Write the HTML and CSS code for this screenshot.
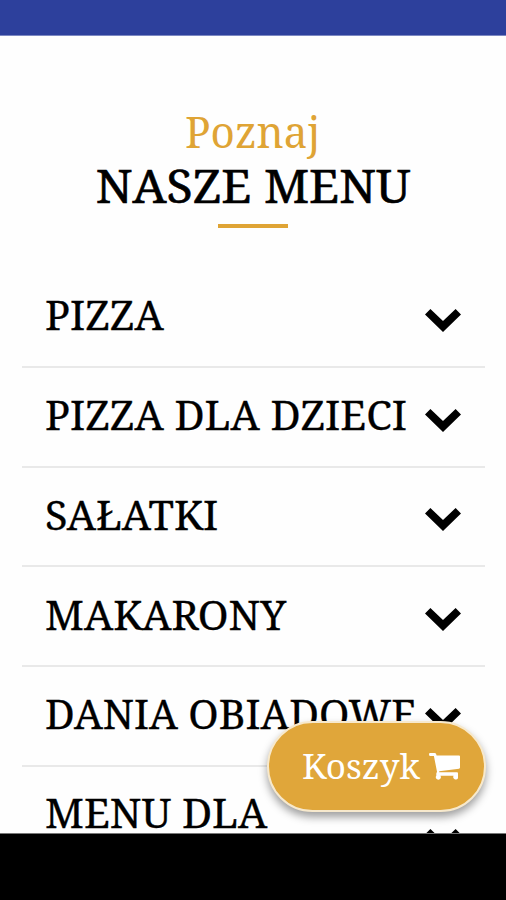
FILE: index.html
```html
<!DOCTYPE html>
<html lang="pl">
<head>
<meta charset="utf-8">
<meta name="viewport" content="width=device-width, initial-scale=1">
<title>Nasze menu</title>
<link rel="stylesheet" href="styles.css">
</head>
<body>
<svg class="symbols" aria-hidden="true">
  <symbol id="chevron" viewBox="0 0 36 23"><path d="M0 5.4 5.4 0 18 12 30.6 0 36 5.4 18 23Z"/></symbol>
</svg>
<div class="status-bar"></div>
<main class="page">
  <header class="heading">
    <p class="heading-lead">Poznaj</p>
    <h1 class="heading-title">NASZE MENU</h1>
    <div class="heading-rule"></div>
  </header>
  <ul class="menu">
    <li class="item"><span class="label">PIZZA</span><svg class="chevron"><use href="#chevron"/></svg></li>
    <li class="item"><span class="label">PIZZA DLA DZIECI</span><svg class="chevron"><use href="#chevron"/></svg></li>
    <li class="item"><span class="label">SAŁATKI</span><svg class="chevron"><use href="#chevron"/></svg></li>
    <li class="item"><span class="label">MAKARONY</span><svg class="chevron"><use href="#chevron"/></svg></li>
    <li class="item"><span class="label label-long">DANIA OBIADOWE</span><svg class="chevron"><use href="#chevron"/></svg></li>
    <li class="item item-tall"><span class="label">MENU DLA</span><svg class="chevron"><use href="#chevron"/></svg></li>
  </ul>
  <a class="cart" href="#"><span class="cart-label">Koszyk</span>
    <svg class="cart-icon" viewBox="0 0 31 28"><path d="M1 0H5.6Q6.8 0 7.1 1L7.6 2.5H30Q31 2.5 31 3.5V14.6Q31 15.6 30 15.8L10.2 18.2V19.3H28Q29 19.3 29 20.6V25.2A2.5 2.5 0 1 1 24.6 22.8H11.4A2.5 2.5 0 1 1 7.3 22.8V20.4L8 18.7 4.9 2.9H1Q0 2.9 0 1.45 0 0 1 0Z"/></svg>
  </a>
</main>
<div class="nav-bar"></div>
</body>
</html>
```
FILE: styles.css
```css
* { box-sizing: border-box; margin: 0; padding: 0; }
body {
  width: 506px;
  height: 900px;
  overflow: hidden;
  background: #fefefe;
  color: #000;
  font-family: "Droid Serif", "Noto Serif", "Liberation Serif", serif;
  display: flex;
  flex-direction: column;
}
.symbols { position: absolute; width: 0; height: 0; }
.status-bar { flex: none; height: 36px; background: #2d409c; border-bottom: 1px solid #7c88c2; }
.page { position: relative; flex: none; height: 797px; overflow: hidden; }
.nav-bar { flex: none; height: 67px; background: #000; border-top: 1px solid #777; }
.heading { display: flex; flex-direction: column; align-items: center; height: 232px; padding-top: 68px; }
.heading-lead {
  font-size: 43.5px; line-height: 55px; color: #dfa435;
  transform: scaleX(.97);
}
.heading-title {
  font-size: 46px; line-height: 52px; font-weight: 400;
  transform: scaleX(1.048);
  -webkit-text-stroke: .6px #000;
}
.heading-rule { width: 70px; height: 4px; margin-top: 13px; background: #dfa435; }
.menu { list-style: none; padding: 0 21px 0 22px; }
.item {
  display: flex; align-items: center; justify-content: space-between;
  height: 99.75px; padding: 0 24px 0 23px; border-bottom: 2px solid #e9e9e9;
}
.item-tall { height: 152px; align-items: flex-start; padding-top: 24px; border: 0; }
.label {
  font-size: 39.5px; line-height: 50px; white-space: nowrap; margin-top: -3px;
  transform: scaleX(1.05); transform-origin: left;
  -webkit-text-stroke: .3px #000;
}
.label-long { transform: scaleX(1.035); }
.chevron { flex: none; width: 36px; height: 23px; margin-top: 7px; }
.item-tall .chevron { margin-top: 38px; }
.cart {
  position: absolute; left: 267px; top: 685px; width: 219px; height: 91px;
  display: flex; align-items: center; padding: 0 0 2px 33px; gap: 9px;
  border: 2px solid #f7e9cd; border-radius: 46px; background: #e0a63a;
  color: #fff; text-decoration: none;
  box-shadow: 0 5px 9px rgba(0, 0, 0, .38);
}
.cart-label { width: 118px; font-size: 35px; line-height: 46px; }
.cart-icon { flex: none; width: 31px; height: 28px; margin-top: 3px; fill: #fff; }
```
